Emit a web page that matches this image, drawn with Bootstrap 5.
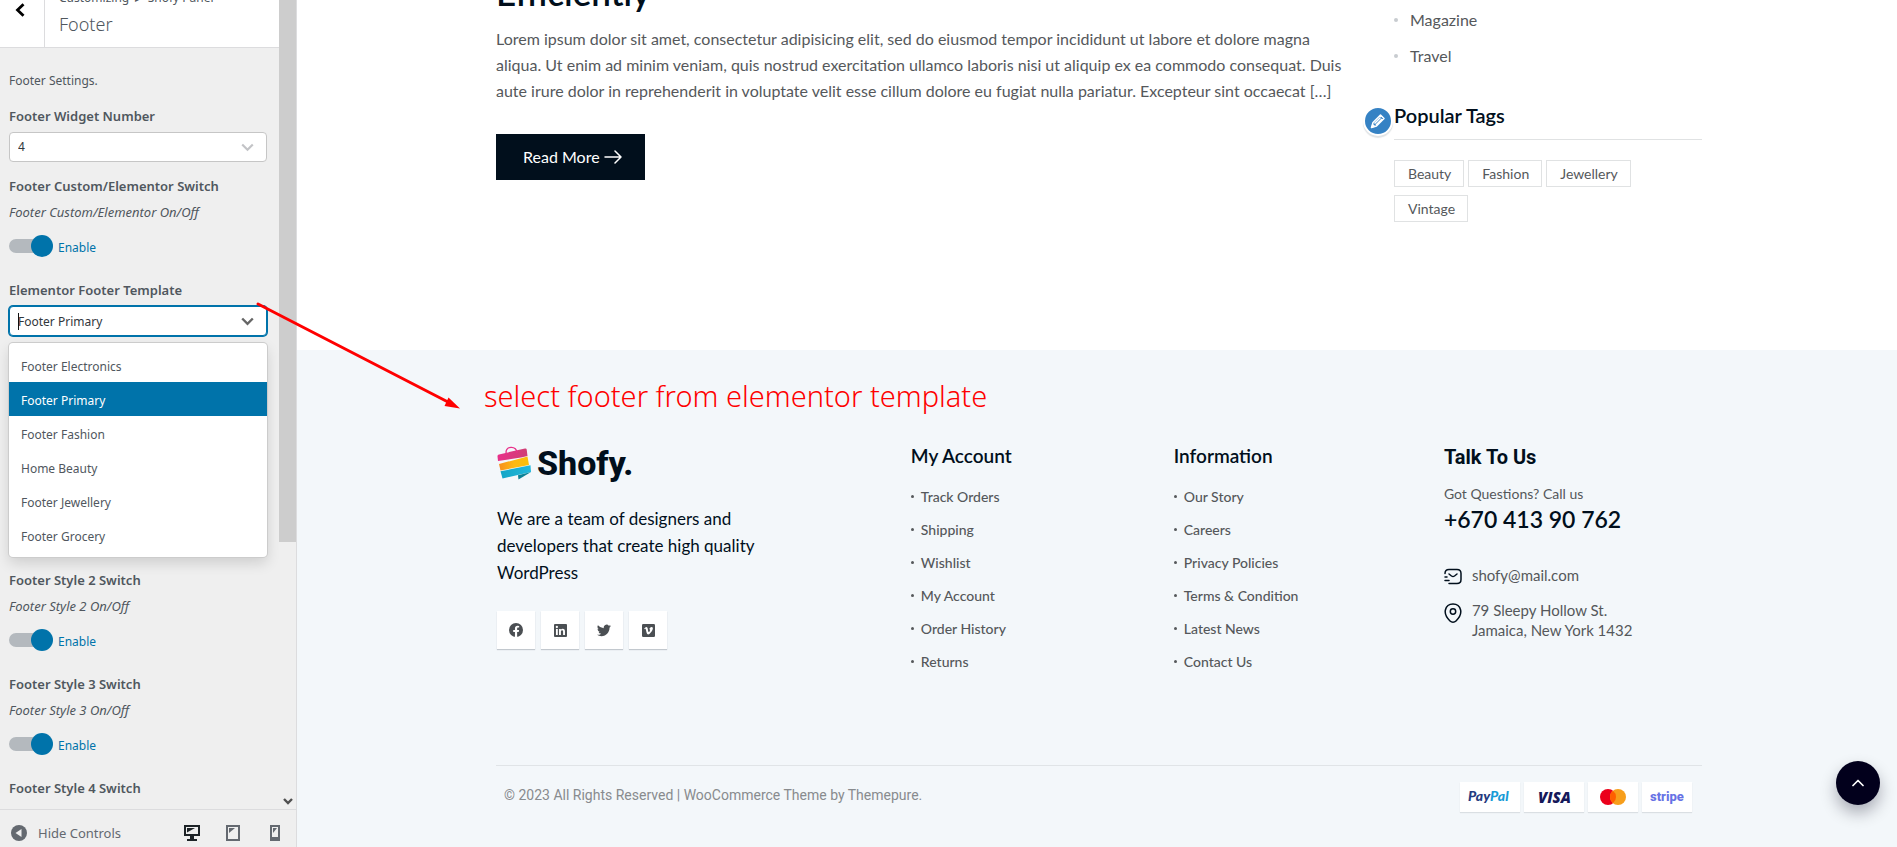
<!DOCTYPE html>
<html lang="en">
<head>
<meta charset="utf-8">
<meta name="viewport" content="width=device-width, initial-scale=1">
<title>Customize: Footer</title>
<link href="https://cdn.jsdelivr.net/npm/bootstrap@5.3.0/dist/css/bootstrap.min.css" rel="stylesheet">
<style>
:root { --navy: #010f1c; --grey: #55585b; --wp: #0073aa; --ui: #50575e; }
body { font-family: Lato, sans-serif; color: var(--grey); background: #fff; }
a { color: inherit; text-decoration: none; }

/* customizer sidebar */
.customizer { width: 297px; background: #efefef; border-right: 1px solid #dcdcde; font: 12px/18px "Noto Sans", sans-serif; color: var(--ui); }
.panel-head { height: 48px; background: #fff; border-bottom: 1px solid #dcdcde; }
.back-btn { width: 45px; border: 0; border-right: 1px solid #dcdcde; background: #fff; padding: 3px 0 0 15px; }
.panel-name { padding: 0 0 10px 14px; }
.panel-name h1 { font-size: 18px; line-height: 26px; font-weight: 300; }
.controls { padding: 24px 12px 0 9px; }
.ctl-label { display: block; font-size: 13px; line-height: 20px; font-weight: 600; }
.ctl-note { font-size: 13px; line-height: 20px; font-style: italic; margin: 6px 0 13px; }
.ctl-settings { margin-bottom: 16px; }
.ctl-select { margin-bottom: 14px; }
.ctl-switch { margin-bottom: 23px; }
.pick { height: 30px; margin-top: 6px; border: 1px solid #c6c6c6; border-radius: 4px; background-color: #fff; }
.pick .form-select, .pick input { height: 28px; border: 0; outline: 0; padding: 0 8px; font-size: 12px; line-height: 28px; color: #32373c; background: transparent; box-shadow: none; }
.pick input { padding-top: 2px; }
.pick.active-pick { border-color: var(--wp); box-shadow: 0 0 0 1px var(--wp); }
.pick svg { right: 12px; top: 10px; }
.caret-line { left: 8px; top: 6px; width: 1px; height: 17px; background: #111; }
.menu { margin: 7px 0 13px; padding: 5px 0; background: #fff; border-radius: 4px; box-shadow: 0 0 0 1px #ccc, 0 6px 14px rgba(0,0,0,.14); }
.menu button { display: block; width: 100%; border: 0; background: none; text-align: left; padding: 4px 12px 0; line-height: 30px; color: var(--ui); }
.menu button.chosen { background: var(--wp); color: #fff; }
.switch-row { height: 22px; gap: 5px; color: var(--wp); }
.switch-row label { line-height: 26px; }
.tgl { appearance: none; width: 44px; height: 22px; margin: 0; position: relative; }
.tgl::before { content: ""; position: absolute; left: 0; right: 2px; top: 4px; height: 14px; border-radius: 7px; background: #b4b9be; }
.tgl::after { content: ""; position: absolute; right: 0; top: 0; width: 22px; height: 22px; border-radius: 50%; background: var(--wp); }
.scroll-rail { width: 17px; }
.scroll-thumb { height: 67%; background: #cdcdcd; }
.panel-foot { height: 38px; border-top: 1px solid #dcdcde; padding: 8px 16px 0 11px; font-size: 13px; }
.panel-foot button { border: 0; background: none; padding: 0; color: #646970; }
.hide-btn { gap: 11px; }
.devices { gap: 26px; }

/* preview */
.wrap { max-width: 1210px; margin: 0 auto; padding-left: 4px; }
.blog { padding-bottom: 128px; }
.post h2 { margin: -30px 0 12px; font-size: 35px; line-height: 44px; font-weight: 600; color: var(--navy); }
.post p { margin: 0 0 30px; font-size: 16px; line-height: 26px; }
.more { height: 46px; padding: 0 23px 0 27px; gap: 4px; background: var(--navy); color: #fff; font-size: 16px; }
.side { width: 308px; }
.cats { margin: 2px 0 26px; font-size: 16px; line-height: 36px; }
.cats li { gap: 12px; }
.cats li::before { content: ""; width: 4px; height: 4px; border-radius: 50%; background: #c8ccd0; }
.tags-head { font-size: 20px; line-height: 30px; font-weight: 600; color: var(--navy); padding-bottom: 9px; margin-bottom: 20px; border-bottom: 1px solid #e0e2e3; }
.edit { left: -31px; top: 6px; width: 30px; height: 30px; padding: 0; border: 2px solid #fff; border-radius: 50%; background: #3582c4; box-shadow: 0 2px 1px rgba(46,68,83,.15); }
.tags { gap: 8px 4px; }
.tags a { border: 1px solid #e0e2e3; padding: 0 12px 0 13px; font-size: 14px; line-height: 25px; }
.foot { background: #f3f7fa; padding: 26px 0 35px; }
.hint { margin: 0 0 28px -12px; font: 300 29px/40px "Noto Sans", sans-serif; color: #f00; }
.col-about { width: 34.4%; padding-left: 1px; }
.col-account { width: 21.8%; }
.col-info { width: 22.4%; }
.brand { gap: 6px; height: 38px; font: 800 34px/38px Roboto, sans-serif; color: var(--navy); }
.about { margin: 23px 0 25px; font-size: 17px; line-height: 27px; color: var(--navy); }
.social { gap: 6px; }
.social a { width: 38px; height: 38px; background: #fff; box-shadow: 0 1px 1px rgba(1,15,28,.2); }
.foot h3 { margin: 0 0 12px; font-size: 19px; line-height: 24px; font-weight: 600; color: var(--navy); }
.links { margin: 0; font-size: 14px; line-height: 33px; font-weight: 500; }
.links li { gap: 7px; }
.links li::before { content: ""; width: 3px; height: 3px; border-radius: 50%; background: var(--grey); }
.col-talk { padding-top: 1px; }
.foot .talk { font: 700 20px/24px Roboto, sans-serif; margin-bottom: 14px; }
.ask { font-size: 14px; line-height: 22px; }
.phone { font-size: 23px; line-height: 28px; font-weight: 600; color: var(--navy); margin-bottom: 32px; }
.contact { font-size: 15px; line-height: 20px; gap: 10px; margin-bottom: 15px; }
.contact svg { margin-top: 3px; }
.legal { margin-top: 87px; border-top: 1px solid #e0e4e7; padding: 16px 10px 0 8px; font: 14px/26px Roboto, sans-serif; color: #888b8e; }
.pay { gap: 4px; }
.pay li { height: 30px; padding: 0 8px; background: #fff; box-shadow: 0 1px 1px rgba(1,15,28,.1); }
.to-top { right: 17px; bottom: 42px; width: 44px; height: 44px; border: 0; border-radius: 50%; background: #02001c; box-shadow: 0 8px 16px rgba(3,4,28,.3); }
.pointer { left: 254px; top: 300px; }
</style>
</head>
<body>
<div class="d-flex vh-100 overflow-hidden position-relative">

  <aside class="customizer d-flex flex-column flex-shrink-0">
    <div class="d-flex flex-grow-1 overflow-hidden">
      <div class="flex-grow-1">
        <header class="panel-head d-flex overflow-hidden">
          <button class="back-btn d-flex" aria-label="Back"><svg width="10" height="14" viewBox="0 0 10 14" fill="none" stroke="#000" stroke-width="2.8"><path d="M8.5 1.2 2.5 7l6 5.800"/></svg></button>
          <div class="panel-name d-flex flex-column justify-content-end">
            <div class="mb-1 text-nowrap">Customizing &nbsp;▸&nbsp; Shofy Panel</div>
            <h1 class="m-0">Footer</h1>
          </div>
        </header>
        <div class="controls">
          <div class="ctl-settings">Footer Settings.</div>

          <div class="ctl-select">
            <label class="ctl-label" for="widgets">Footer Widget Number</label>
            <div class="pick position-relative">
              <select class="form-select" id="widgets"><option>4</option></select>
              <svg class="position-absolute" width="13" height="9" viewBox="0 0 13 9" fill="none" stroke="#c3c4c7" stroke-width="2.200"><path d="M1.200 1.500 6.500 6.800l5.300-5.300"/></svg>
            </div>
          </div>

          <div class="ctl-switch">
            <span class="ctl-label">Footer Custom/Elementor Switch</span>
            <p class="ctl-note">Footer Custom/Elementor On/Off</p>
            <div class="switch-row d-flex"><input class="tgl" type="checkbox" id="sw1" checked><label for="sw1">Enable</label></div>
          </div>

          <div>
            <label class="ctl-label" for="template">Elementor Footer Template</label>
            <div class="pick active-pick position-relative">
              <input class="w-100" id="template" type="text" value="Footer Primary">
              <span class="caret-line position-absolute"></span>
              <svg class="position-absolute" width="13" height="9" viewBox="0 0 13 9" fill="none" stroke="#666" stroke-width="2.400"><path d="M1.200 1.500 6.500 6.800l5.300-5.300"/></svg>
            </div>
            <div class="menu">
              <button>Footer Electronics</button>
              <button class="chosen">Footer Primary</button>
              <button>Footer Fashion</button>
              <button>Home Beauty</button>
              <button>Footer Jewellery</button>
              <button>Footer Grocery</button>
            </div>
          </div>

          <div class="ctl-switch">
            <span class="ctl-label">Footer Style 2 Switch</span>
            <p class="ctl-note">Footer Style 2 On/Off</p>
            <div class="switch-row d-flex"><input class="tgl" type="checkbox" id="sw2" checked><label for="sw2">Enable</label></div>
          </div>
          <div class="ctl-switch">
            <span class="ctl-label">Footer Style 3 Switch</span>
            <p class="ctl-note">Footer Style 3 On/Off</p>
            <div class="switch-row d-flex"><input class="tgl" type="checkbox" id="sw3" checked><label for="sw3">Enable</label></div>
          </div>
          <span class="ctl-label">Footer Style 4 Switch</span>
        </div>
      </div>
      <div class="scroll-rail d-flex flex-column justify-content-between align-items-center flex-shrink-0">
        <div class="scroll-thumb w-100"></div>
        <svg class="mb-1" width="10" height="7" viewBox="0 0 10 7" fill="none" stroke="#505050" stroke-width="2.400"><path d="m1 1 4 4 4-4"/></svg>
      </div>
    </div>
    <footer class="panel-foot d-flex align-items-center justify-content-between flex-shrink-0">
      <button class="hide-btn d-flex align-items-center"><svg width="16" height="16" viewBox="0 0 16 16"><circle cx="8" cy="8" r="8" fill="#646970"/><path d="M10.500 4v8L4.500 8z" fill="#efefef"/></svg>Hide Controls</button>
      <div class="devices d-flex align-items-center">
        <button class="d-flex" aria-label="Desktop"><svg width="16" height="16" viewBox="0 0 16 16" fill="#1d2327"><path fill-rule="evenodd" d="M0 0h16v11h-6v3h3v2H3v-2h3v-3H0zM2 2v7h12V2z"/><path d="M3 3h8L3 7.500z"/></svg></button>
        <button class="d-flex" aria-label="Tablet"><svg width="14" height="16" viewBox="0 0 14 16" fill="#646970"><path fill-rule="evenodd" d="M0 0h14v16H0zM2 2v12h10V2z"/><path d="M3 3h6L3 8z"/></svg></button>
        <button class="d-flex ms-1" aria-label="Mobile"><svg width="10" height="16" viewBox="0 0 10 16" fill="#646970"><path fill-rule="evenodd" d="M0 0h10v16H0zM2 2v10h6V2z"/><path d="M3 3h4L3 8z"/></svg></button>
      </div>
    </footer>
  </aside>

  <main class="flex-grow-1 overflow-hidden position-relative">
    <section class="blog">
      <div class="wrap d-flex justify-content-between">
        <article class="post">
          <h2>Efficiently</h2>
          <p>Lorem ipsum dolor sit amet, consectetur adipisicing elit, sed do eiusmod tempor incididunt ut labore et dolore magna<br>aliqua. Ut enim ad minim veniam, quis nostrud exercitation ullamco laboris nisi ut aliquip ex ea commodo consequat. Duis<br>aute irure dolor in reprehenderit in voluptate velit esse cillum dolore eu fugiat nulla pariatur. Excepteur sint occaecat […]</p>
          <a class="more d-inline-flex align-items-center" href="#">Read More <svg width="18" height="14" viewBox="0 0 18 14" fill="none" stroke="#fff" stroke-width="1.500" stroke-linecap="round" stroke-linejoin="round"><path d="M1 7h16M11 1l6 6-6 6"/></svg></a>
        </article>
        <aside class="side flex-shrink-0">
          <ul class="cats list-unstyled">
            <li class="d-flex align-items-center"><a href="#">Magazine</a></li>
            <li class="d-flex align-items-center"><a href="#">Travel</a></li>
          </ul>
          <h3 class="tags-head position-relative">
            <button class="edit position-absolute d-flex align-items-center justify-content-center" aria-label="Edit widget"><svg width="16" height="16" viewBox="0 0 16 16" fill="none" stroke="#fff" stroke-width="1.500" stroke-linejoin="round"><path d="M1.500 14.500 3 9.500 10.500 2 14 5.500 6.500 13zM4.500 10.500l6-6M6 12l6-6"/><path d="M1 15l1.500-4.500L5.500 13.500z" fill="#fff" stroke="none"/></svg></button>
            Popular Tags</h3>
          <div class="tags d-flex flex-wrap"><a href="#">Beauty</a><a href="#">Fashion</a><a href="#">Jewellery</a><a href="#">Vintage</a></div>
        </aside>
      </div>
    </section>

    <footer class="foot">
      <div class="wrap">
        <p class="hint">select footer from elementor template</p>
        <div class="d-flex">
          <div class="col-about">
            <div class="brand d-flex align-items-center">
              <svg width="34" height="34" viewBox="0 0 34 34"><defs><linearGradient id="yl"><stop stop-color="#f78f1e"/><stop offset=".5" stop-color="#fdb913"/><stop offset="1" stop-color="#fbbf08"/></linearGradient><linearGradient id="pk"><stop stop-color="#e8308a"/><stop offset="1" stop-color="#cf3f74"/></linearGradient><linearGradient id="bl"><stop stop-color="#12a5c6"/><stop offset="1" stop-color="#22b8dc"/></linearGradient></defs><path d="M.5 10.500Q.3 8.800 2 8.400L28 2.500q1.500-.3 1.700 1L30.500 10 24 11.500 1 15z" fill="url(#pk)"/><path d="M9.500 8.500C8 4 10.500 1.500 14 1.300S20 3.500 20 7" fill="none" stroke="#e8308a" stroke-width="1.300"/><path d="M2 18 30.500 10.500l1.500 8.500L3.500 24.500z" fill="url(#yl)"/><path d="m3.500 25.300 30-6 .5 6.700-28.500 6.500z" fill="url(#bl)"/><path d="m21 29.300 13-3.300-12.500 7.500z" fill="#0c8296"/></svg>
              <span>Shofy.</span>
            </div>
            <p class="about">We are a team of designers and<br>developers that create high quality<br>WordPress</p>
            <div class="social d-flex">
              <a class="d-flex align-items-center justify-content-center" href="#" aria-label="Facebook"><svg width="14" height="14" viewBox="0 0 16 16"><circle cx="8" cy="8" r="8" fill="#4b4f53"/><path d="M6.800 16v-5.700H4.800V8h2V6.200c0-2 1.200-3.100 3-3.100l1.800.2v1.900h-1c-1 0-1.300.6-1.300 1.300V8h2.200l-.4 2.300H9.300V16z" fill="#fff"/></svg></a>
              <a class="d-flex align-items-center justify-content-center" href="#" aria-label="LinkedIn"><svg width="13" height="13" viewBox="0 0 16 16"><rect width="16" height="16" rx="1.200" fill="#4b4f53"/><path d="M2.400 6h2.300v7.500H2.400zM6.200 6h2.200v1c.5-.8 1.300-1.200 2.300-1.200 2.200 0 2.800 1.400 2.800 3.400v4.300h-2.300V9.700c0-1 0-2-1.300-2s-1.400 1-1.400 2v3.800H6.200z" fill="#fff"/><circle cx="3.500" cy="3.700" r="1.400" fill="#fff"/></svg></a>
              <a class="d-flex align-items-center justify-content-center" href="#" aria-label="Twitter"><svg width="14" height="14" viewBox="0 0 16 16"><path fill="#4b4f53" d="M5 15c6 0 9.300-5 9.300-9.300v-.4A6.700 6.700 0 0 0 16 3.500a6.500 6.500 0 0 1-1.900.5 3.300 3.300 0 0 0 1.400-1.800 6.500 6.500 0 0 1-2 .8 3.300 3.300 0 0 0-5.700 3A9.300 9.300 0 0 1 1.100 2.600a3.300 3.300 0 0 0 1 4.400 3.200 3.200 0 0 1-1.500-.4 3.300 3.300 0 0 0 2.600 3.300 3.300 3.300 0 0 1-1.500 0 3.300 3.300 0 0 0 3.100 2.300A6.600 6.600 0 0 1 0 13.500 9.300 9.300 0 0 0 5 15"/></svg></a>
              <a class="d-flex align-items-center justify-content-center" href="#" aria-label="Vimeo"><svg width="13" height="13" viewBox="0 0 16 16"><rect width="16" height="16" rx="1.500" fill="#4b4f53"/><path d="M2.500 5.700c1-.9 2-2 2.800-2.100 2-.2 1.900 3.600 2.400 5.200.4 1.400.9 1.400 1.700 0 .6-1 1-2.200.2-2.200-.3 0-.6.100-.8.200.6-1.900 1.600-3.300 3.200-3.200 1.300.1 1.700 1.200 1.200 3-.7 2.500-3.800 6.300-5.500 6.400-1.800.1-2.300-3.600-3.100-6.400-.3-.9-.7-.7-1.500-.1z" fill="#fff"/></svg></a>
            </div>
          </div>
          <div class="col-account">
            <h3>My Account</h3>
            <ul class="links list-unstyled">
              <li class="d-flex align-items-center"><a href="#">Track Orders</a></li>
              <li class="d-flex align-items-center"><a href="#">Shipping</a></li>
              <li class="d-flex align-items-center"><a href="#">Wishlist</a></li>
              <li class="d-flex align-items-center"><a href="#">My Account</a></li>
              <li class="d-flex align-items-center"><a href="#">Order History</a></li>
              <li class="d-flex align-items-center"><a href="#">Returns</a></li>
            </ul>
          </div>
          <div class="col-info">
            <h3>Information</h3>
            <ul class="links list-unstyled">
              <li class="d-flex align-items-center"><a href="#">Our Story</a></li>
              <li class="d-flex align-items-center"><a href="#">Careers</a></li>
              <li class="d-flex align-items-center"><a href="#">Privacy Policies</a></li>
              <li class="d-flex align-items-center"><a href="#">Terms &amp; Condition</a></li>
              <li class="d-flex align-items-center"><a href="#">Latest News</a></li>
              <li class="d-flex align-items-center"><a href="#">Contact Us</a></li>
            </ul>
          </div>
          <div class="col-talk">
            <h3 class="talk">Talk To Us</h3>
            <div class="ask">Got Questions? Call us</div>
            <div class="phone"><a href="#">+670 413 90 762</a></div>
            <div class="contact d-flex"><svg width="18" height="17" viewBox="0 0 18 17" fill="none" stroke="#010f1c" stroke-width="1.500" stroke-linecap="round" stroke-linejoin="round"><path d="M1 5.500C1 2.800 2.500 1.500 5 1.500h8c2.500 0 4 1.300 4 4v6c0 2.700-1.500 4-4 4H5M5 6l2.500 2q1.500 1 3 0L13 6M1 12.500h4M1 9h2"/></svg><a href="#">shofy@mail.com</a></div>
            <div class="contact d-flex mb-0"><svg width="18" height="20" viewBox="0 0 18 20" fill="none" stroke="#010f1c" stroke-width="1.500"><path d="M1.400 7C2.300 3 5.500 1 9 1s6.700 2 7.600 6c1 4.500-1.800 8.300-4.600 11a4.400 4.400 0 0 1-6 0C3.200 15.300.4 11.500 1.400 7z"/><circle cx="9" cy="8.500" r="2.700"/></svg><a href="#">79 Sleepy Hollow St.<br>Jamaica, New York 1432</a></div>
          </div>
        </div>
        <div class="legal d-flex justify-content-between align-items-start">
          <span>© 2023 All Rights Reserved | WooCommerce Theme by Themepure.</span>
          <ul class="pay d-flex list-unstyled m-0">
            <li class="d-flex align-items-center"><svg width="44" height="20" viewBox="0 0 44 20" font-family="Lato, sans-serif" font-weight="900" font-style="italic" font-size="14"><text x="0" y="14" fill="#253b80">Pay<tspan fill="#179bd7">Pal</tspan></text></svg></li>
            <li class="d-flex align-items-center"><svg width="44" height="20" viewBox="0 0 44 20"><text x="6" y="16" font-family="Open Sans, sans-serif" font-weight="800" font-style="italic" font-size="15" fill="#15195a">VISA</text></svg></li>
            <li class="d-flex align-items-center"><svg width="34" height="20" viewBox="0 0 34 20"><circle cx="12" cy="10" r="8" fill="#eb001b"/><circle cx="22" cy="10" r="8" fill="#f79e1b"/><path d="M17 3.750a8 8 0 0 1 0 12.500 8 8 0 0 1 0-12.500" fill="#ff5f00"/></svg></li>
            <li class="d-flex align-items-center"><svg width="34" height="20" viewBox="0 0 34 20"><text x="0" y="14" font-family="Roboto, sans-serif" font-weight="800" font-size="13" fill="#6772e5">stripe</text></svg></li>
          </ul>
        </div>
      </div>
    </footer>
    <button class="to-top position-absolute d-flex align-items-center justify-content-center" aria-label="Back to top"><svg width="12" height="8" viewBox="0 0 12 8" fill="none" stroke="#fff" stroke-width="1.700" stroke-linecap="round" stroke-linejoin="round"><path d="m1 6.500 5-5 5 5"/></svg></button>
  </main>

  <svg class="pointer position-absolute" width="210" height="112" viewBox="0 0 210 112"><path d="M4 4 194 102" stroke="#f00" stroke-width="3" stroke-linecap="round"/><path d="M206 108.500 190.500 106l4-8.500z" fill="#f00"/></svg>
</div>
<script src="https://cdn.jsdelivr.net/npm/bootstrap@5.3.0/dist/js/bootstrap.bundle.min.js"></script>
</body>
</html>
